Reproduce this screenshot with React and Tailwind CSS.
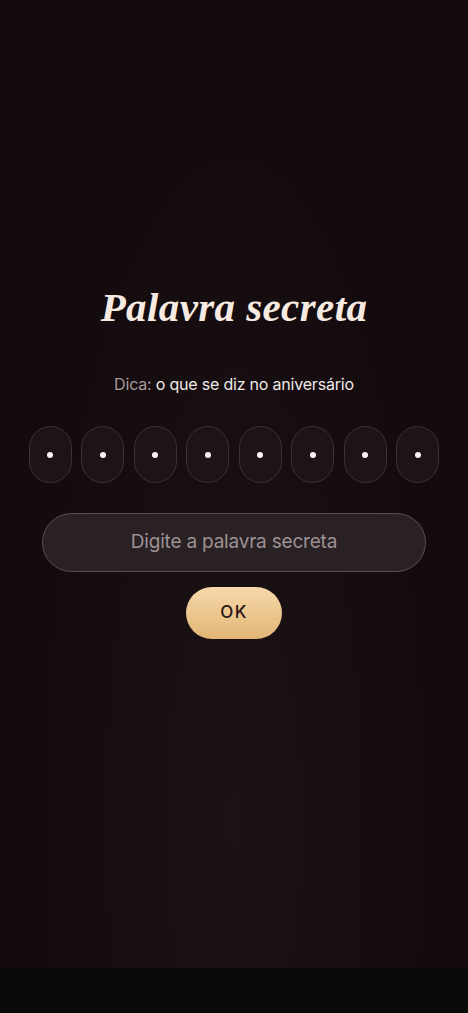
export default function App() {
  const slots = Array.from({ length: 8 });

  return (
    <div className="w-full h-[1013px] flex flex-col bg-[#0b0a0a]">
      <div className="h-[968px] flex flex-col items-center bg-[radial-gradient(ellipse_at_50%_85%,#1c1216_0%,#130b0e_60%,#120a0d_100%)] pt-[284px]">
        <h1 className="font-['Liberation_Serif',serif] italic font-bold text-[41px] leading-[46px] text-[#f7ebe1] tracking-[0.4px]">
          Palavra secreta
        </h1>

        <p className="mt-[44px] font-['Inter',sans-serif] text-[16px] leading-[20px] text-[#f1e9e7] tracking-[-0.2px]">
          <span className="text-[#a59a9b]">Dica:</span> o que se diz no aniversário
        </p>

        <div className="mt-[32px] flex gap-[9.5px]">
          {slots.map((_, i) => (
            <div
              key={i}
              className="w-[43px] h-[57px] rounded-full border border-[#3d3236] bg-[#1d1418] flex items-center justify-center"
            >
              <span className="w-[6px] h-[6px] rounded-full bg-[#fbf3ef]" />
            </div>
          ))}
        </div>

        <div className="mt-[30px] w-[384px] h-[59px] rounded-full border border-[#5a4f53] bg-[#2a2125] flex items-center justify-center">
          <span className="font-['Inter',sans-serif] text-[19px] text-[#9c9193] tracking-[-0.2px]">
            Digite a palavra secreta
          </span>
        </div>

        <button className="mt-[15px] w-[96px] h-[52px] rounded-full bg-gradient-to-b from-[#f6d9aa] to-[#e2b676] flex items-center justify-center">
          <span className="font-['Inter',sans-serif] font-medium text-[17px] text-[#2a1416] tracking-[1.5px]">
            OK
          </span>
        </button>
      </div>
      <div className="flex-1 bg-[#0a0a0b]" />
    </div>
  );
}
